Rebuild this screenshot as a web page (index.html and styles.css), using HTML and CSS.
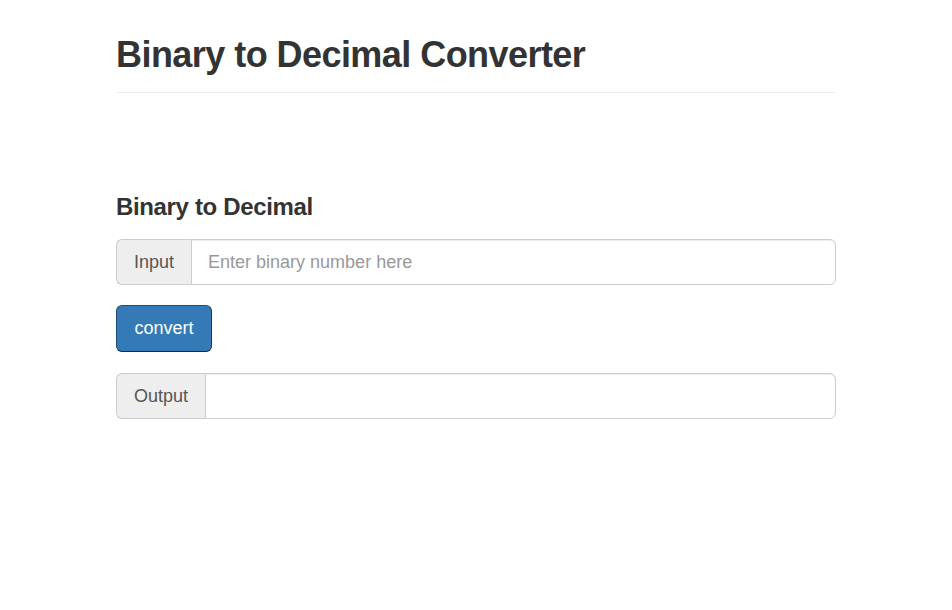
FILE: index.html
```html
<!DOCTYPE html>
<html lang="en">
<head>
<meta charset="utf-8">
<title>Binary to Decimal Converter</title>
<link rel="stylesheet" href="styles.css">
</head>
<body>
<div class="container">
  <div class="page-header">
    <h1>Binary to Decimal Converter</h1>
  </div>
  <div class="converter">
    <h3>Binary to Decimal</h3>
    <div class="input-group">
      <span class="addon">Input</span>
      <input class="field" type="text" placeholder="Enter binary number here">
    </div>
    <button class="btn" type="button">convert</button>
    <div class="input-group">
      <span class="addon">Output</span>
      <input class="field" type="text">
    </div>
  </div>
</div>
</body>
</html>
```

FILE: styles.css
```css
* { box-sizing: border-box; }
html, body { margin: 0; padding: 0; background: #fff; }
body {
  font-family: "Liberation Sans", Arial, Helvetica, sans-serif;
  font-size: 14px;
  line-height: 1.42857;
  color: #333;
}
.container {
  width: 750px;
  margin: 0 auto;
  padding: 0 15px;
}
.page-header {
  margin: 35px 0 0;
  padding-bottom: 9px;
  border-bottom: 1px solid #eee;
}
.page-header h1 {
  margin: 0 0 8px;
  font-size: 36px;
  font-weight: 700;
  letter-spacing: -0.55px;
  line-height: 1.1;
  color: #333;
}
.converter {
  padding-top: 101px;
}
.converter h3 {
  margin: 0 0 19px;
  font-size: 24px;
  font-weight: 700;
  letter-spacing: -0.35px;
  line-height: 1.1;
  color: #333;
}
.input-group {
  display: flex;
  width: 100%;
  height: 46px;
}
.addon {
  display: flex;
  align-items: center;
  padding: 2px 17px 0;
  font-size: 18px;
  color: #555;
  background: #eee;
  border: 1px solid #ccc;
  border-right: 0;
  border-radius: 6px 0 0 6px;
  white-space: nowrap;
}
.field {
  flex: 1;
  min-width: 0;
  height: 46px;
  padding: 2px 16px 0;
  font-family: inherit;
  font-size: 18px;
  color: #555;
  background: #fff;
  border: 1px solid #ccc;
  border-radius: 0 6px 6px 0;
  box-shadow: inset 0 1px 1px rgba(0,0,0,.075);
  outline: none;
}
.field::placeholder { color: #999; }
.btn {
  display: block;
  margin: 20px 0 21px;
  height: 47px;
  padding: 1px 17.5px 0;
  font-family: inherit;
  font-size: 18px;
  color: #fff;
  background: #337ab7;
  border: 1px solid #204d74;
  border-bottom-color: #122b40;
  border-right-color: #1a3a5a;
  border-radius: 6px;
  cursor: pointer;
}
```
